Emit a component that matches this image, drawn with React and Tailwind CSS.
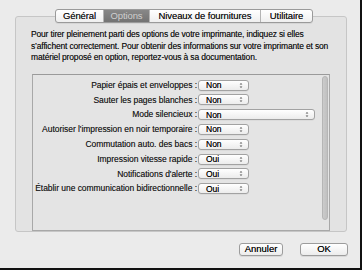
import React from "react";

const rows = [
  ["Papier épais et enveloppes :", "Non", false],
  ["Sauter les pages blanches :", "Non", false],
  ["Mode silencieux :", "Non", true],
  ["Autoriser l'impression en noir temporaire :", "Non", false],
  ["Commutation auto. des bacs :", "Non", false],
  ["Impression vitesse rapide :", "Oui", false],
  ["Notifications d'alerte :", "Oui", false],
  ["Établir une communication bidirectionnelle :", "Oui", false],
];

function Arrows() {
  return (
    <svg width="4" height="7" viewBox="0 0 4 7" className="shrink-0">
      <path d="M0.6 2.6 L2 0.9 L3.4 2.6 Z" fill="#555" />
      <path d="M0.6 4.4 L2 6.1 L3.4 4.4 Z" fill="#555" />
    </svg>
  );
}

function Select({ value, wide }) {
  return (
    <div
      className={`${wide ? "w-[117px]" : "w-[51px]"} h-[11px] rounded-[3px] border border-[#a2a2a2] bg-linear-to-b from-white to-[#ececec] flex items-center justify-between pl-[7px] pr-[5px] text-[8.5px] leading-none text-black [text-shadow:0_0_0.4px_rgba(0,0,0,0.6)] shadow-[0_0.5px_0_rgba(0,0,0,0.08)]`}
    >
      <span>{value}</span>
      <Arrows />
    </div>
  );
}

function Tab({ label, selected, last }) {
  return (
    <div
      className={`h-full flex items-center justify-center ${
        selected
          ? "bg-linear-to-b from-[#888] to-[#737373] text-[#cfcfcf]"
          : "text-[#111] [text-shadow:0_0_0.4px_rgba(0,0,0,0.6)]"
      } ${last ? "" : "border-r border-[#b4b4b4]"}`}
    >
      {label}
    </div>
  );
}

export default function App() {
  return (
    <div
      className="w-[362px] h-[270px] bg-[#ebebeb] border-r-2 border-b-2 border-[#111] overflow-hidden"
      style={{ fontFamily: '"Liberation Sans", Arial, sans-serif' }}
    >
      <div className="pt-[9px] pl-[15px] w-[347px]">
        <div className="flex justify-center relative z-10 pl-[6px]">
          <div className="flex h-[14px] rounded-[3px] border border-[#9a9a9a] overflow-hidden bg-linear-to-b from-white to-[#efefef] text-[9.5px] tracking-[-0.1px] shadow-[0_1px_0_rgba(0,0,0,0.06)]">
            <div className="w-[48px]"><Tab label="Général" /></div>
            <div className="w-[46px]"><Tab label="Options" selected /></div>
            <div className="w-[111px]"><Tab label="Niveaux de fournitures" /></div>
            <div className="w-[51px]"><Tab label="Utilitaire" last /></div>
          </div>
        </div>
        <div className="-mt-[7px] w-[332px] h-[216px] rounded-[3px] border border-[#c6c6c6] bg-[#e3e3e3] flex flex-col">
          <p className="mt-[12px] ml-[15px] text-[8.5px] leading-[11.6px] text-[#111] tracking-[-0.17px] whitespace-nowrap [text-shadow:0_0_0.3px_rgba(0,0,0,0.5)]">
            Pour tirer pleinement parti des options de votre imprimante, indiquez si elles
            <br />
            s’affichent correctement. Pour obtenir des informations sur votre imprimante et son
            <br />
            matériel proposé en option, reportez-vous à sa documentation.
          </p>
          <div className="mt-[10px] ml-[16px] w-[298px] h-[157px] border border-[#a8a8a8] border-t-[#9a9a9a] bg-[#e4e4e4] flex">
            <div className="flex-1 pt-[3px] flex flex-col">
              {rows.map(([label, val, wide], i) => (
                <div key={i} className="h-[14.8px] flex items-center">
                  <div className="w-[164px] text-right text-[8.5px] tracking-[-0.05px] text-[#1c1c1c] whitespace-nowrap [text-shadow:0_0_0.3px_rgba(0,0,0,0.5)]">
                    {label}
                  </div>
                  <div className="ml-[1px]">
                    <Select value={val} wide={wide} />
                  </div>
                </div>
              ))}
            </div>
            <div className="w-[6px] mr-[1px] pt-[1px] pb-[10px]">
              <div className="h-full rounded-full bg-linear-to-r from-[#cbcbcb] to-[#c0c0c0] border border-[#b5b5b5]" />
            </div>
          </div>
        </div>
      </div>
      <div className="flex justify-end gap-[17px] pr-[12px] mt-[11px]">
        <div className="w-[44px] h-[13px] rounded-[3px] border border-[#9c9c9c] bg-linear-to-b from-white to-[#ececec] flex items-center justify-center text-[9.5px] text-black [text-shadow:0_0_0.4px_rgba(0,0,0,0.6)] shadow-[0_1px_0_rgba(0,0,0,0.08)]">
          Annuler
        </div>
        <div className="w-[48px] h-[13px] rounded-[3px] border border-[#9c9c9c] bg-linear-to-b from-white to-[#ececec] flex items-center justify-center text-[9.5px] text-black [text-shadow:0_0_0.4px_rgba(0,0,0,0.6)] shadow-[0_1px_0_rgba(0,0,0,0.08)]">
          OK
        </div>
      </div>
    </div>
  );
}
